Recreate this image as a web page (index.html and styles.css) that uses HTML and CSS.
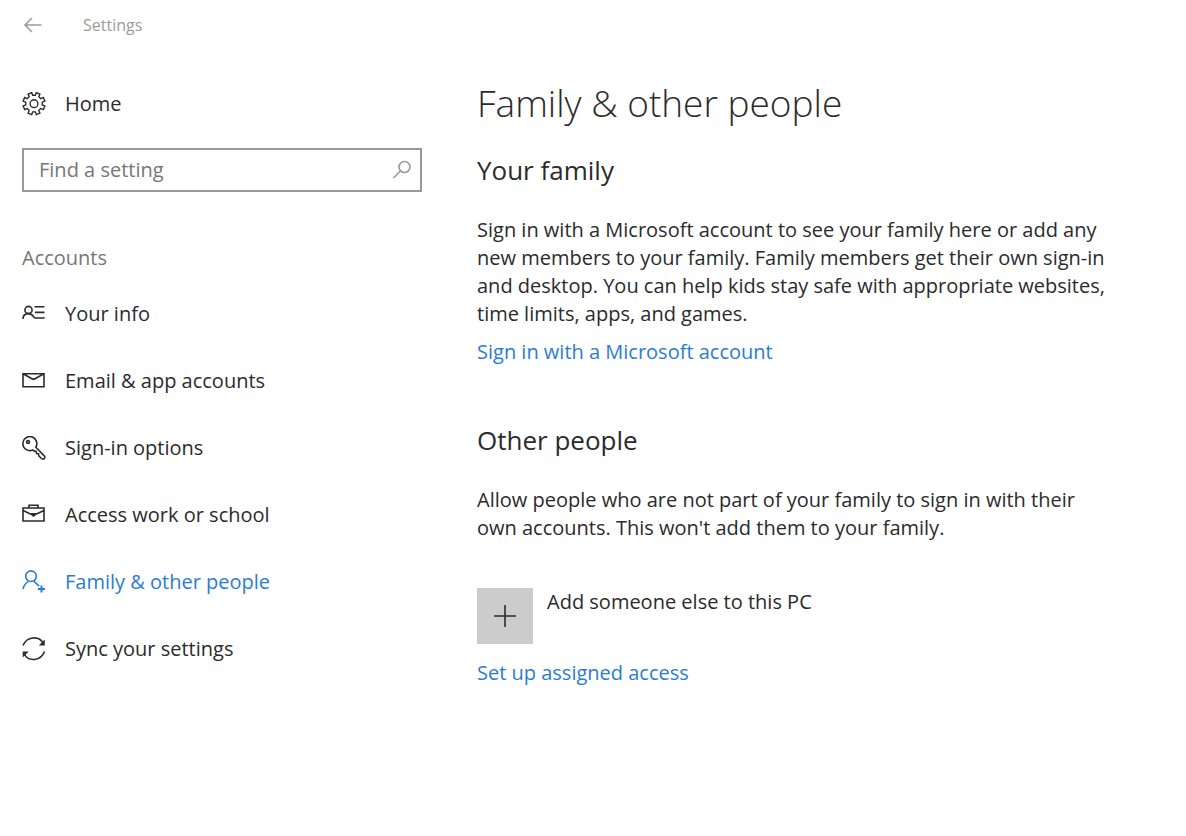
FILE: index.html
```html
<!DOCTYPE html>
<html lang="en">
<head>
    <meta charset="UTF-8">
    <meta name="viewport" content="width=device-width, initial-scale=1.0">
    <title>Settings</title>
    <link rel="stylesheet" href="styles.css">
</head>
<body>
    <header class="titlebar">
        <button class="back" type="button" aria-label="Back">
            <svg width="24" height="24" viewBox="0 0 24 24"><path d="M19.500 12H3.500M10 5l-7 7 7 7"/></svg>
        </button>
        <span class="title">Settings</span>
    </header>

    <div class="layout">
        <aside class="sidebar">
            <a class="nav-link" href="#">
                <svg class="gear" width="24" height="24" viewBox="1.500 1 21 21"><path d="M10 1.500l.8 2.300h2.400l.8-2.300 3.200 1.300-1 2.300 1.700 1.700 2.300-1 1.300 3.200-2.300.9v2.400l2.300.9-1.300 3.200-2.300-1-1.700 1.700 1 2.300-3.200 1.300-.8-2.300h-2.400l-.8 2.300-3.200-1.300 1-2.300-1.700-1.700-2.300 1-1.300-3.200 2.300-.9V9.900l-2.300-.9 1.300-3.200 2.300 1 1.700-1.700-1-2.300z"/><circle cx="12" cy="11.200" r="3.400"/></svg>
                Home
            </a>

            <form class="search">
                <input type="text" placeholder="Find a setting" aria-label="Find a setting">
                <svg width="20" height="20" viewBox="0 0 20 20"><circle cx="12.500" cy="7" r="5.500"/><path d="M8.500 11L1.500 18"/></svg>
            </form>

            <h2 class="group">Accounts</h2>
            <nav class="nav">
                <a class="nav-link" href="#">
                    <svg width="24" height="24" viewBox="0 0 24 24"><circle cx="6.500" cy="8" r="3.600"/><path d="M1 17c0-3.400 2.200-5.400 5.500-5.400 3 0 4.300 1.800 5.200 3.300.5.900 1 1.100 2 1.100h9M12.500 4.800h10M13 10.400h9.500"/></svg>
                    Your info
                </a>
                <a class="nav-link" href="#">
                    <svg width="24" height="24" viewBox="0 0 24 24"><path d="M1 4.800h21v13H1zM1.500 5l8.500 4.700q1.500.8 3 0L21.500 5"/></svg>
                    Email &amp; app accounts
                </a>
                <a class="nav-link" href="#">
                    <svg width="24" height="24" viewBox="0 0 24 24"><path d="M13.800 11.200A7 7 0 1 0 10.600 14l1.900 1.200 1.600.1.500 2.200 1.900.3.300 2 2.600 2.700c1.200 1 2.600.7 3.200-.3.500-.9.300-1.800-.6-2.600z"/><circle cx="6" cy="6" r="1.400"/></svg>
                    Sign-in options
                </a>
                <a class="nav-link" href="#">
                    <svg width="24" height="24" viewBox="0 0 24 24"><path d="M1 5h21v13H1zM7 5V2.200h9V5M1 7.500l8 3.800M22 7.500l-8 3.800"/><path class="solid" d="M9 10h5v2l-2.500 2L9 12z"/></svg>
                    Access work or school
                </a>
                <a class="nav-link active" href="#">
                    <svg width="24" height="24" viewBox="0 0 24 24"><circle cx="9" cy="6.200" r="5.300"/><path d="M1 19c.8-3.800 2.600-6 5.200-7.400M11.800 11.200l5.200 5"/><path class="bold" d="M19.500 15.500v7M16 19h7"/></svg>
                    Family &amp; other people
                </a>
                <a class="nav-link" href="#">
                    <svg width="24" height="24" viewBox="0 0 24 24"><path d="M1 8.500C4.500-.5 17-2 21.500 6.500M22.500 14.500C19 24 6.500 25.500 2 16.500"/><path class="solid" d="M22.800 2.500v6h-6zM.7 20.500v-6h6z"/></svg>
                    Sync your settings
                </a>
            </nav>
        </aside>

        <main class="content">
            <h1>Family &amp; other people</h1>

            <section class="section">
                <h2>Your family</h2>
                <p>Sign in with a Microsoft account to see your family here or add any new members to your family. Family members get their own sign-in and desktop. You can help kids stay safe with appropriate websites, time limits, apps, and games.</p>
                <a class="action" href="#">Sign in with a Microsoft account</a>
            </section>

            <section class="section">
                <h2>Other people</h2>
                <p>Allow people who are not part of your family to sign in with their own accounts. This won't add them to your family.</p>
                <button class="add" type="button">
                    <span class="add-box">
                        <svg width="24" height="24" viewBox="0 0 24 24"><path d="M12 1v22M1 12h22"/></svg>
                    </span>
                    Add someone else to this PC
                </button>
                <a class="action" href="#">Set up assigned access</a>
            </section>
        </main>
    </div>
</body>
</html>
```
FILE: styles.css
```css
* {
    box-sizing: border-box;
}
body {
    margin: 0;
    background: #fff;
    color: #2b2b2b;
    font-family: "Segoe UI", "Open Sans", sans-serif;
    font-size: 20px;
    line-height: 28px;
}
h1, h2, p {
    margin: 0;
    font-weight: normal;
}
a {
    color: #2b7cd3;
    text-decoration: none;
}
button {
    padding: 0;
    border: none;
    background: none;
    color: inherit;
    font: inherit;
    cursor: pointer;
}
svg {
    display: block;
    flex: none;
    fill: none;
    stroke: currentColor;
    stroke-width: 1.6;
}
.gear {
    stroke-width: 1.2;
}
.bold {
    stroke-width: 2;
}
.solid {
    fill: currentColor;
    stroke: none;
}
.titlebar {
    display: flex;
    align-items: center;
    gap: 37px;
    height: 50px;
    padding: 0 22px;
    color: #9b9b9b;
}
.title {
    font-size: 16px;
}
.layout {
    display: flex;
    gap: 55px;
    padding: 0 22px;
}
.sidebar {
    flex: 0 0 400px;
    padding-top: 20px;
}
.nav-link {
    display: flex;
    align-items: center;
    gap: 19px;
    height: 67px;
    color: #2b2b2b;
}
.nav-link.active {
    color: #2b7cd3;
}
.search {
    position: relative;
    margin-top: 11px;
    color: #999;
}
.search input {
    display: block;
    width: 100%;
    height: 44px;
    padding: 0 48px 2px 15px;
    border: 2px solid #999;
    outline: none;
    color: #2b2b2b;
    font: inherit;
}
.search input::placeholder {
    color: #767676;
    opacity: 1;
}
.search svg {
    position: absolute;
    top: 12px;
    right: 10px;
}
.group {
    margin-top: 52px;
    color: #767676;
    font-size: 20px;
}
.nav {
    margin-top: 8px;
}
.content {
    flex: 1;
    min-width: 0;
    max-width: 632px;
    padding-top: 27px;
}
h1 {
    font-size: 37px;
    font-weight: 350;
    line-height: 52px;
}
.section {
    margin-top: 23px;
}
.section + .section {
    margin-top: 56px;
}
.section h2 {
    font-size: 26px;
    line-height: 36px;
}
.section p {
    margin: 28px 0 10px;
}
.action {
    display: block;
}
.add {
    display: flex;
    align-items: flex-start;
    gap: 14px;
    margin: 46px 0 15px;
}
.add-box {
    display: flex;
    align-items: center;
    justify-content: center;
    width: 56px;
    height: 56px;
    background: #ccc;
}
```
